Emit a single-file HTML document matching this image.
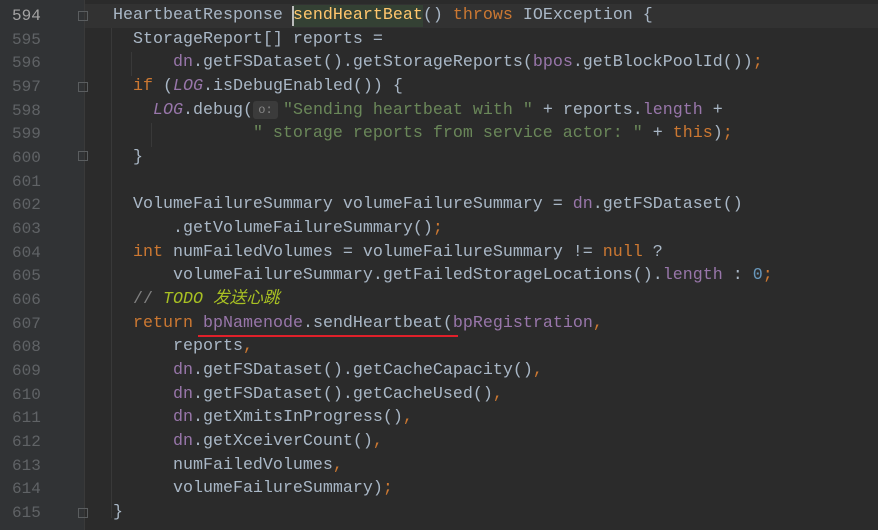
<!DOCTYPE html><html><head><style>
body{margin:0;width:878px;height:530px;background:#2b2b2b;overflow:hidden;position:relative;font-family:"Liberation Mono","Noto Sans CJK SC",monospace;}
#g{position:absolute;left:0;top:0;width:84px;height:530px;background:#313335;}
.n{position:absolute;left:12px;width:40px;font-size:16px;color:#606366;height:24px;line-height:24px;}
.l{position:absolute;left:113px;font-size:16.67px;color:#a9b7c6;white-space:pre;height:24px;line-height:24px;}
.k{color:#cc7832}.f{color:#9876aa}.fi{color:#9876aa;font-style:italic}.m{color:#ffc66d}.s{color:#6a8759}.d{color:#6897bb}.c{color:#808080}.t{color:#a8c023;font-style:italic}
.fold{position:absolute;left:78px;width:10px;height:10px;border:1px solid #5a5d5f;box-sizing:border-box}
.hint{display:inline-block;background:#3b3b3b;color:#888;font-size:12px;border-radius:3px;width:25px;text-align:center;line-height:18px;vertical-align:1px;margin-right:5px}
</style></head><body>
<div id="g"></div>
<div style="position:absolute;left:84px;top:4px;width:794px;height:24px;background:#323232"></div>
<div style="position:absolute;left:293px;top:5px;width:130px;height:22px;background:#344134"></div>
<div style="position:absolute;left:292px;top:6px;width:2px;height:20px;background:#bbb"></div>
<div style="position:absolute;left:84px;top:0;width:1px;height:530px;background:#3a3a3a"></div>
<div style="position:absolute;left:111px;top:28px;width:1px;height:490px;background:#393939"></div>
<div style="position:absolute;left:131px;top:52px;width:1px;height:24px;background:#393939"></div>
<div style="position:absolute;left:151px;top:123px;width:1px;height:24px;background:#393939"></div>
<div class="fold" style="top:11px"></div><div class="fold" style="top:82px"></div><div class="fold" style="top:151px"></div><div class="fold" style="top:508px"></div>
<div style="position:absolute;left:198px;top:335px;width:260px;height:2px;background:#e0202a"></div>
<div class="n" style="top:4px;color:#a4a3a3">594</div>
<div class="n" style="top:27.7px">595</div><div class="n" style="top:51.3px">596</div><div class="n" style="top:75px">597</div><div class="n" style="top:98.7px">598</div><div class="n" style="top:122.4px">599</div><div class="n" style="top:146px">600</div><div class="n" style="top:169.7px">601</div><div class="n" style="top:193.4px">602</div><div class="n" style="top:217px">603</div><div class="n" style="top:240.7px">604</div><div class="n" style="top:264.4px">605</div><div class="n" style="top:288px">606</div><div class="n" style="top:311.7px">607</div><div class="n" style="top:335.4px">608</div><div class="n" style="top:359px">609</div><div class="n" style="top:382.7px">610</div><div class="n" style="top:406.4px">611</div><div class="n" style="top:430px">612</div><div class="n" style="top:453.7px">613</div><div class="n" style="top:477.4px">614</div><div class="n" style="top:501px">615</div>
<div class="l" style="top:4px">HeartbeatResponse <span class="m">sendHeartBeat</span>() <span class="k">throws</span> IOException {</div>
<div class="l" style="top:27.7px">  StorageReport[] reports =</div>
<div class="l" style="top:51.3px">      <span class="f">dn</span>.getFSDataset().getStorageReports(<span class="f">bpos</span>.getBlockPoolId())<span class="k">;</span></div>
<div class="l" style="top:75px">  <span class="k">if</span> (<span class="fi">LOG</span>.isDebugEnabled()) {</div>
<div class="l" style="top:98.7px">    <span class="fi">LOG</span>.debug(<span class="hint">o:</span><span class="s">"Sending heartbeat with "</span> + reports.<span class="f">length</span> +</div>
<div class="l" style="top:122.4px">              <span class="s">" storage reports from service actor: "</span> + <span class="k">this</span>)<span class="k">;</span></div>
<div class="l" style="top:146px">  }</div>
<div class="l" style="top:193.4px">  VolumeFailureSummary volumeFailureSummary = <span class="f">dn</span>.getFSDataset()</div>
<div class="l" style="top:217px">      .getVolumeFailureSummary()<span class="k">;</span></div>
<div class="l" style="top:240.7px">  <span class="k">int</span> numFailedVolumes = volumeFailureSummary != <span class="k">null</span> ?</div>
<div class="l" style="top:264.4px">      volumeFailureSummary.getFailedStorageLocations().<span class="f">length</span> : <span class="d">0</span><span class="k">;</span></div>
<div class="l" style="top:288px">  <span class="c">// </span><span class="t">TODO 发送心跳</span></div>
<div class="l" style="top:311.7px">  <span class="k">return</span> <span class="f">bpNamenode</span>.sendHeartbeat(<span class="f">bpRegistration</span><span class="k">,</span></div>
<div class="l" style="top:335.4px">      reports<span class="k">,</span></div>
<div class="l" style="top:359px">      <span class="f">dn</span>.getFSDataset().getCacheCapacity()<span class="k">,</span></div>
<div class="l" style="top:382.7px">      <span class="f">dn</span>.getFSDataset().getCacheUsed()<span class="k">,</span></div>
<div class="l" style="top:406.4px">      <span class="f">dn</span>.getXmitsInProgress()<span class="k">,</span></div>
<div class="l" style="top:430px">      <span class="f">dn</span>.getXceiverCount()<span class="k">,</span></div>
<div class="l" style="top:453.7px">      numFailedVolumes<span class="k">,</span></div>
<div class="l" style="top:477.4px">      volumeFailureSummary)<span class="k">;</span></div>
<div class="l" style="top:501px">}</div>
</body></html>
